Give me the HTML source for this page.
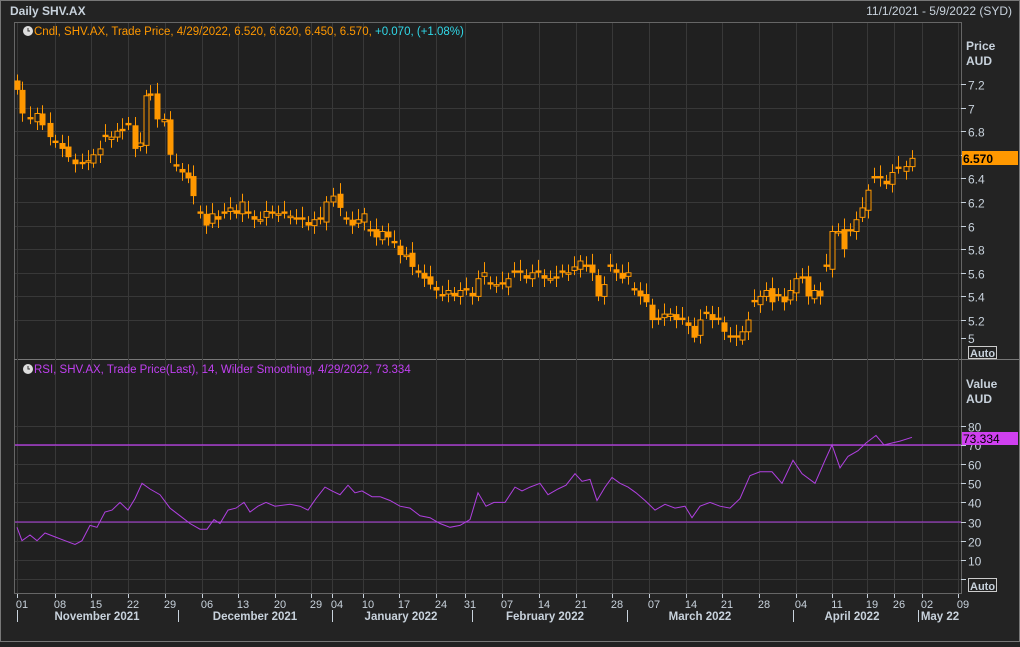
<!DOCTYPE html>
<html><head><meta charset="utf-8"><style>
body{margin:0;background:#222;width:1020px;height:642px;overflow:hidden;font-family:"Liberation Sans",sans-serif}
</style></head><body>
<svg id="s" width="1020" height="642" xmlns="http://www.w3.org/2000/svg" font-family="Liberation Sans, sans-serif">
<rect x="0" y="0" width="1020" height="642" fill="#232323"/>
<rect x="0.5" y="0.5" width="1019" height="641" fill="none" stroke="#777"/>
<text x="10" y="15" font-size="12" font-weight="bold" fill="#c8d2dc">Daily SHV.AX</text>
<text x="1012" y="15" font-size="12" fill="#c8d2dc" text-anchor="end">11/1/2021 - 5/9/2022 (SYD)</text>
<rect x="14.5" y="22.5" width="947" height="571" fill="#202020" stroke="#666"/>
<line x1="14" y1="359.5" x2="1020" y2="359.5" stroke="#777"/>
<g id="grid" stroke="#383838" stroke-width="1"></g>
<g id="c"></g>
<line x1="15" y1="445" x2="961" y2="445" stroke="#c040f0" stroke-width="1.2"/>
<line x1="15" y1="522" x2="961" y2="522" stroke="#b040e0" stroke-width="1"/>
<polyline id="rsi" fill="none" stroke="#b040e0" stroke-width="1"/>
<g font-size="12" fill="#c8d2dc" id="ax"></g>
<text x="966" y="50" font-size="12" font-weight="bold" fill="#c8d2dc">Price</text>
<text x="966" y="65" font-size="12" font-weight="bold" fill="#c8d2dc">AUD</text>
<text x="966" y="388" font-size="12" font-weight="bold" fill="#c8d2dc">Value</text>
<text x="966" y="403" font-size="12" font-weight="bold" fill="#c8d2dc">AUD</text>
<rect x="962" y="151" width="56" height="14" fill="#ff9800"/>
<text x="963" y="163" font-size="12" font-weight="bold" fill="#000">6.570</text>
<rect x="962" y="432" width="56" height="13" fill="#d040f0"/>
<text x="963" y="443" font-size="12" fill="#000">73.334</text>
<rect x="968.5" y="346.5" width="28" height="12" fill="none" stroke="#ccc"/>
<text x="970" y="357" font-size="11" font-weight="bold" fill="#c8d2dc">Auto</text>
<rect x="968.5" y="578.5" width="28" height="13" fill="none" stroke="#ccc"/>
<text x="970" y="590" font-size="11" font-weight="bold" fill="#c8d2dc">Auto</text>
<circle cx="28" cy="31" r="5" fill="#ddd"/><path d="M28 28v3h2" stroke="#333" fill="none"/>
<text x="34" y="35" font-size="11.5" fill="#ff9800">Cndl, SHV.AX, Trade Price,  4/29/2022, 6.520, 6.620, 6.450, 6.570, <tspan fill="#30d8e8">+0.070, (+1.08%)</tspan></text>
<circle cx="28" cy="369" r="5" fill="#ddd"/><path d="M28 366v3h2" stroke="#333" fill="none"/>
<text x="34" y="373" font-size="11.5" fill="#c040f0">RSI, SHV.AX, Trade Price(Last),  14, Wilder Smoothing,  4/29/2022, 73.334</text>
<g font-size="11.5" font-weight="bold" fill="#c8d2dc" text-anchor="middle">
<text x="97" y="620">November 2021</text><text x="255" y="620">December 2021</text><text x="401" y="620">January 2022</text><text x="545" y="620">February 2022</text><text x="700" y="620">March 2022</text><text x="852" y="620">April 2022</text><text x="940" y="620">May 22</text>
</g>
<g stroke="#c8d2dc"><line x1="17.5" y1="610" x2="17.5" y2="622"/><line x1="178.5" y1="610" x2="178.5" y2="622"/><line x1="332.5" y1="610" x2="332.5" y2="622"/><line x1="472.5" y1="610" x2="472.5" y2="622"/><line x1="627.5" y1="610" x2="627.5" y2="622"/><line x1="793.5" y1="610" x2="793.5" y2="622"/><line x1="918.5" y1="610" x2="918.5" y2="622"/></g>
</svg>
<script>
var NS="http://www.w3.org/2000/svg";
function el(p,t,a,txt){var e=document.createElementNS(NS,t);for(var k in a)e.setAttribute(k,a[k]);if(txt!=null)e.textContent=txt;document.getElementById(p).appendChild(e);return e;}
var days=[[17,"01"],[55,"08"],[91,"15"],[128,"22"],[165,"29"],[202,"06"],[238,"13"],[275,"20"],[311,"29"],[332,"04"],[363,"10"],[399,"17"],[436,"24"],[465,"31"],[502,"07"],[539,"14"],[576,"21"],[612,"28"],[649,"07"],[686,"14"],[722,"21"],[759,"28"],[796,"04"],[832,"11"],[867,"19"],[894,"26"],[922,"02"],[958,"09"]];
days.forEach(function(d){el("grid","line",{x1:d[0]+.5,y1:23,x2:d[0]+.5,y2:593});el("ax","line",{x1:d[0]+.5,y1:594,x2:d[0]+.5,y2:598,stroke:"#c8d2dc"});el("ax","text",{x:d[0]+5,y:608,"text-anchor":"middle","font-size":"11"},d[1]);});
function py(p){return 84+(7.2-p)*118;}
[7.2,7,6.8,6.6,6.4,6.2,6,5.8,5.6,5.4,5.2].forEach(function(p){var y=Math.round(py(p))+.5;el("grid","line",{x1:15,y1:y,x2:961,y2:y});el("ax","line",{x1:961,y1:y,x2:966,y2:y,stroke:"#c8d2dc"});el("ax","text",{x:968,y:y+5},String(p));});
el("ax","line",{x1:961,y1:338.5,x2:966,y2:338.5,stroke:"#c8d2dc"});el("ax","text",{x:968,y:343},"5");
for(var v=0;v<=80;v+=10){var y=Math.round(579-v*1.915)+.5;el("grid","line",{x1:15,y1:y,x2:961,y2:y});el("ax","line",{x1:961,y1:y,x2:966,y2:y,stroke:"#c8d2dc"});if(v>0&&v!=70)el("ax","text",{x:968,y:y+5},String(v));}
el("ax","text",{x:968,y:450},"70");
var closes=[[17,7.15],[22,6.95],[30,6.9],[37,6.95],[42,6.85],[50,6.75],[55,6.7],[62,6.65],[68,6.58],[75,6.52],[82,6.52],[88,6.55],[93,6.6],[100,6.65],[105,6.75],[111,6.75],[117,6.8],[122,6.8],[128,6.85],[135,6.65],[140,6.7],[146,7.1],[150,7.1],[157,6.9],[164,6.9],[170,6.6],[176,6.5],[182,6.45],[188,6.4],[193,6.25],[200,6.1],[206,6.0],[212,6.1],[218,6.05],[224,6.1],[230,6.15],[236,6.1],[242,6.2],[248,6.1],[254,6.05],[260,6.05],[266,6.12],[272,6.1],[278,6.1],[284,6.1],[290,6.08],[296,6.05],[302,6.05],[308,6.0],[314,6.05],[320,6.05],[326,6.2],[333,6.25],[340,6.15],[346,6.05],[352,6.0],[358,6.05],[364,6.1],[370,5.95],[376,5.9],[382,5.95],[388,5.9],[394,5.85],[400,5.75],[406,5.75],[412,5.65],[418,5.6],[424,5.55],[430,5.5],[436,5.45],[442,5.4],[448,5.45],[454,5.4],[460,5.45],[466,5.45],[472,5.4],[478,5.55],[484,5.6],[490,5.5],[496,5.5],[502,5.5],[508,5.55],[514,5.6],[520,5.6],[526,5.55],[532,5.6],[538,5.6],[544,5.55],[550,5.55],[556,5.55],[562,5.6],[568,5.6],[574,5.65],[580,5.7],[586,5.65],[592,5.6],[598,5.4],[604,5.5],[610,5.65],[616,5.6],[622,5.55],[628,5.6],[634,5.45],[640,5.4],[646,5.35],[652,5.2],[658,5.2],[664,5.25],[670,5.25],[676,5.2],[682,5.2],[688,5.15],[694,5.05],[700,5.2],[706,5.25],[712,5.2],[718,5.2],[724,5.1],[730,5.05],[736,5.05],[742,5.1],[748,5.2],[754,5.35],[760,5.4],[766,5.45],[772,5.35],[778,5.4],[784,5.35],[790,5.45],[796,5.55],[802,5.55],[808,5.4],[814,5.45],[820,5.4],[826,5.65],[832,5.95],[838,5.95],[844,5.8],[850,5.95],[856,6.05],[862,6.15],[868,6.3],[874,6.4],[880,6.4],[886,6.35],[892,6.45],[898,6.48],[906,6.5],[912,6.57]];
var prev=7.25;
closes.forEach(function(c,i){var x=c[0],cl=c[1],op=(i%4==2)?cl+0.02:prev+((i%3)-1)*0.02;var hi=Math.max(op,cl)+0.05+(i%3)*0.02,lo=Math.min(op,cl)-0.04-(i%2)*0.03;
el("c","line",{x1:x+.5,y1:py(hi),x2:x+.5,y2:py(lo),stroke:"#ff9800"});
var t=py(Math.max(op,cl)),b=py(Math.min(op,cl));var h=Math.max(1.5,b-t);
if(cl<op)el("c","rect",{x:x-2.5,y:t,width:6,height:h,fill:"#ff9800"});
else el("c","rect",{x:x-2,y:t,width:5,height:h,fill:"#202020",stroke:"#ff9800"});
prev=cl;});
var r=[[17,27],[22,20],[30,23],[37,20],[45,24],[55,22],[65,20],[75,18],[82,20],[90,28],[97,27],[105,35],[112,36],[120,40],[128,36],[135,42],[142,50],[150,47],[160,44],[170,37],[180,33],[190,29],[200,26],[207,26],[214,31],[220,29],[228,36],[236,37],[244,40],[250,35],[258,38],[266,40],[275,38],[290,39],[300,38],[308,36],[316,42],[325,48],[332,46],[340,44],[348,49],[355,45],[362,46],[372,43],[380,43],[390,41],[400,38],[410,37],[420,33],[430,32],[440,29],[450,27],[460,28],[470,31],[478,45],[486,38],[494,40],[505,40],[515,48],[522,46],[530,48],[540,50],[548,44],[558,47],[566,49],[575,55],[582,51],[590,52],[597,41],[605,48],[612,53],[620,50],[628,48],[636,45],[645,41],[655,36],[665,39],[675,37],[685,38],[692,32],[700,38],[710,40],[720,38],[730,37],[740,42],[750,54],[760,56],[772,56],[782,50],[793,62],[802,55],[815,50],[825,62],[832,70],[840,58],[848,64],[858,67],[866,71],[876,75],[884,70],[892,71],[900,72],[912,74]];
document.getElementById("rsi").setAttribute("points",r.map(function(p){return p[0]+","+(579-p[1]*1.915).toFixed(1)}).join(" "));
</script>
</body></html>
